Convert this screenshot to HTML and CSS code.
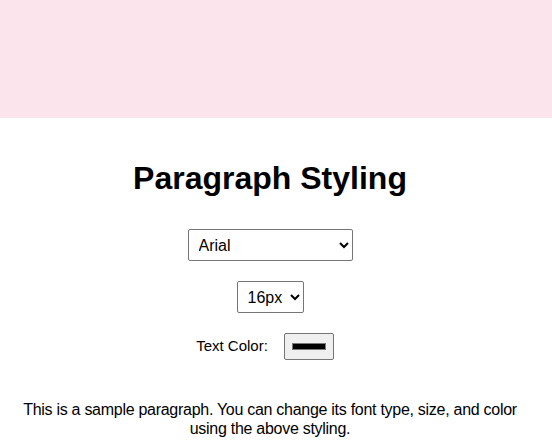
FILE: index.html
```html
<!DOCTYPE html>
<html lang="en">
<head>
<meta charset="utf-8">
<title>Paragraph Styling</title>
<link rel="stylesheet" href="styles.css">
</head>
<body>
<div class="banner"></div>
<main class="panel">
  <h1 class="title">Paragraph Styling</h1>
  <select class="font-select">
    <option>Arial</option>
    <option>Times New Roman</option>
    <option>Courier New</option>
    <option>Verdana</option>
  </select>
  <select class="size-select">
    <option>16px</option>
    <option>12px</option>
    <option>20px</option>
    <option>24px</option>
  </select>
  <div class="color-row">
    <label class="color-label" for="color">Text Color:</label>
    <input class="color-input" id="color" type="color" value="#000000">
  </div>
  <p class="sample">This is a sample paragraph. You can change its font type, size, and color using the above styling.</p>
</main>
</body>
</html>
```

FILE: styles.css
```css
html, body {
  margin: 0;
  padding: 0;
  background: #ffffff;
}
body {
  font-family: "Liberation Sans", Arial, sans-serif;
  font-size: 16px;
  color: #000000;
}
.banner {
  height: 118px;
  background: #fce4ec;
}
.panel {
  display: flex;
  flex-direction: column;
  align-items: center;
  text-align: center;
  padding: 0 20px;
  margin-right: 12px;
}
.title {
  font-size: 32px;
  font-weight: bold;
  margin: 42px 0 32px;
}
.font-select,
.size-select {
  font-family: "Liberation Sans", Arial, sans-serif;
  font-size: 16px;
  height: 32px;
  padding: 0 4px 0 6px;
  border: 1px solid #767676;
  border-radius: 2px;
  background: #ffffff;
  color: #000000;
}
.font-select {
  width: 165px;
}
.size-select {
  margin-top: 20px;
  width: 67px;
}
.color-row {
  margin-top: 20px;
  display: flex;
  align-items: center;
  gap: 16px;
  padding-right: 10px;
}
.color-label {
  font-size: 15px;
  margin-top: -3px;
}
.color-input {
  box-sizing: border-box;
  width: 50px;
  height: 27px;
  margin: 0;
  padding: 5px;
  border: 1px solid #767676;
  border-radius: 2px;
  background: #efefef;
}
.sample {
  margin: 40px 0 0;
  line-height: 19px;
  letter-spacing: -0.28px;
}
```
